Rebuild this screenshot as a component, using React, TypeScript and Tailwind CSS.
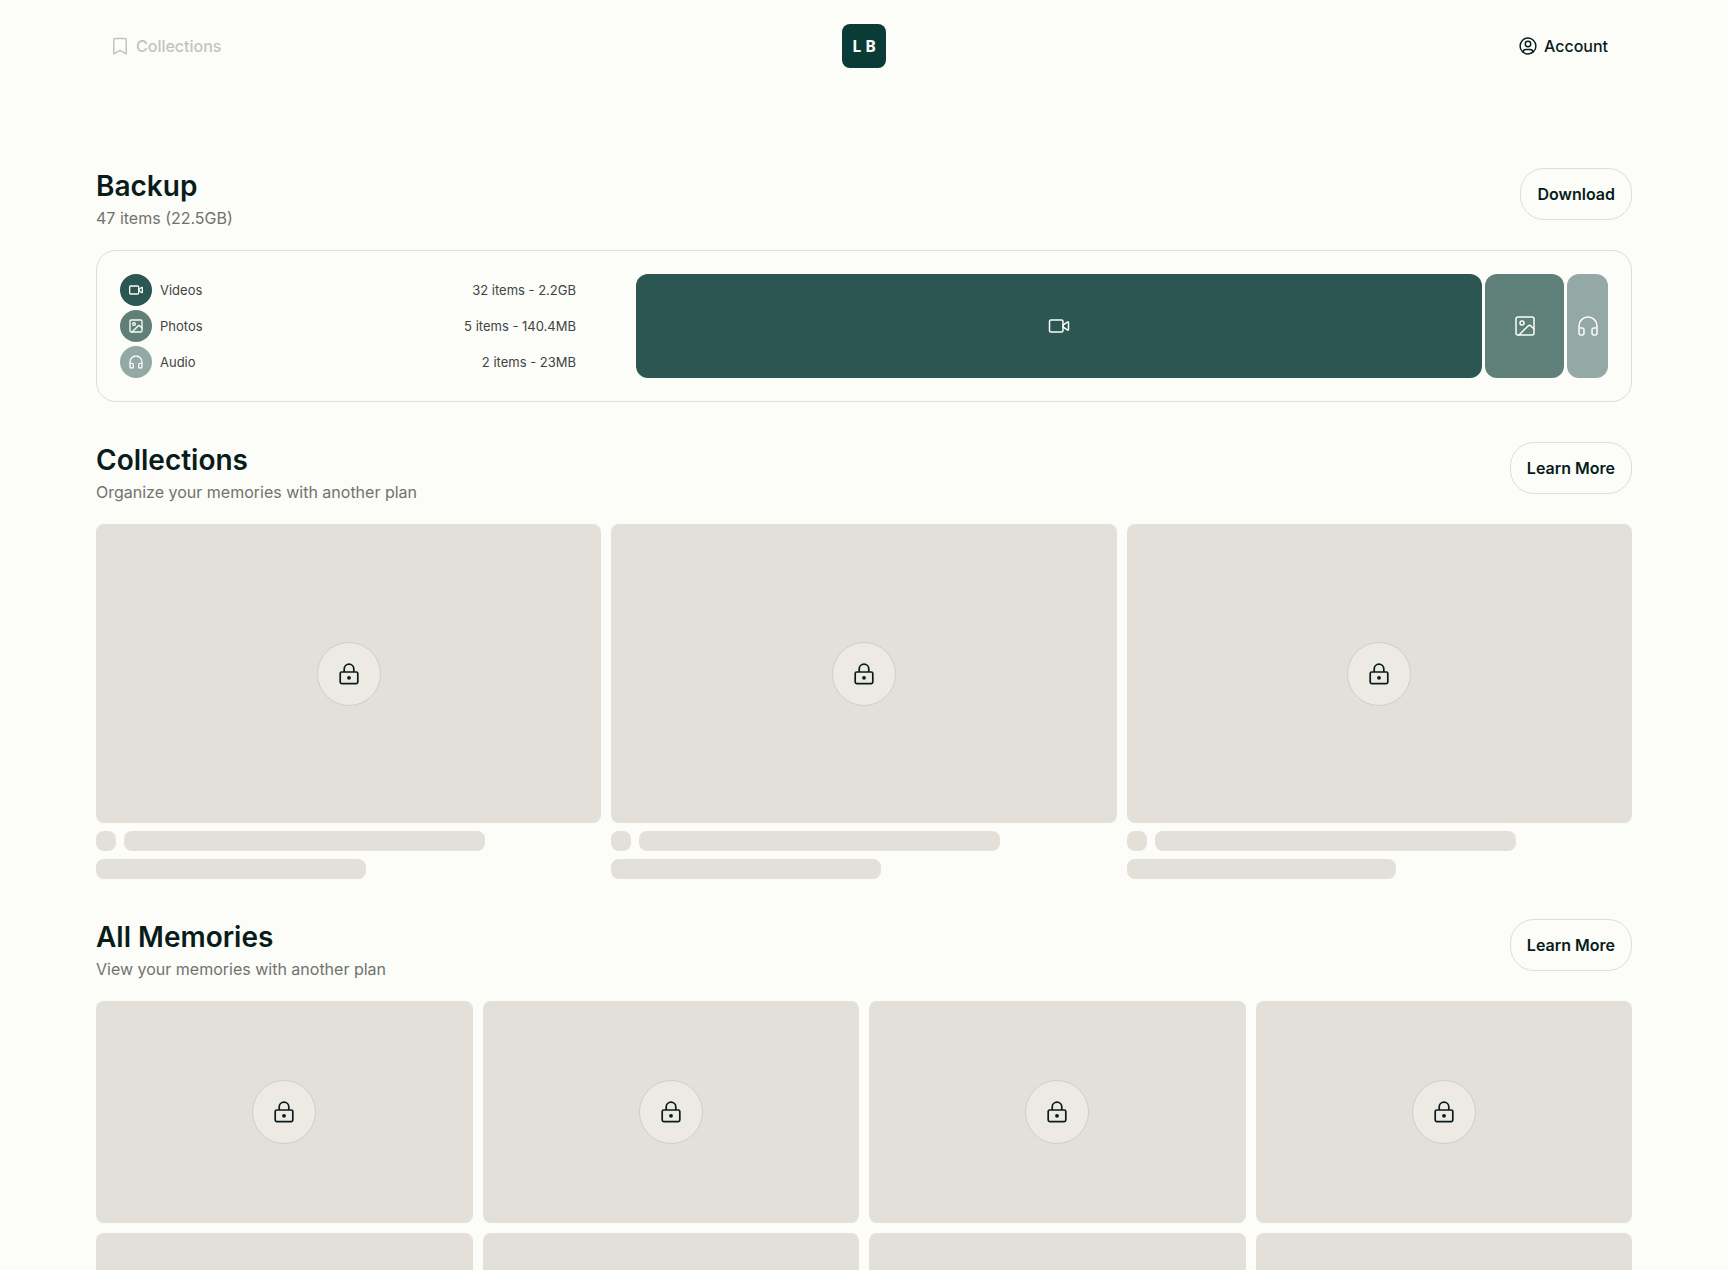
import type { ReactNode } from 'react';
import { Headphones, Image as ImageIcon } from 'lucide-react';

type IconProps = { className?: string };

function VideoIcon({ className }: IconProps) {
    return (
        <svg className={className} viewBox="0 0 24 24" fill="none" stroke="currentColor" strokeWidth="1.5" strokeLinejoin="round" aria-hidden="true">
            <rect x="2.5" y="6" width="13.5" height="12" rx="1.5" />
            <path d="M16 11.2 20.3 8.2q1.2-.7 1.2.5v6.6q0 1.2-1.2.5L16 12.8Z" />
        </svg>
    );
}

function PhotoIcon({ className }: IconProps) {
    return <ImageIcon className={className} strokeWidth={1.5} aria-hidden="true" />;
}

function AudioIcon({ className }: IconProps) {
    return <Headphones className={className} strokeWidth={1.5} aria-hidden="true" />;
}

function BookmarkIcon({ className }: IconProps) {
    return (
        <svg className={className} viewBox="0 0 24 24" fill="none" stroke="currentColor" strokeWidth="1.75" strokeLinejoin="round" aria-hidden="true">
            <path d="M4.5 4.5a1.5 1.5 0 0 1 1.5-1.5h12a1.5 1.5 0 0 1 1.5 1.5v17L12 17.2 4.5 21.5Z" />
        </svg>
    );
}

function AccountIcon({ className }: IconProps) {
    return (
        <svg className={className} viewBox="0 0 24 24" fill="none" stroke="currentColor" strokeWidth="1.75" strokeLinecap="round" aria-hidden="true">
            <circle cx="12" cy="12" r="9.5" />
            <circle cx="12" cy="9.5" r="3.3" />
            <path d="M6 19.3c.3-2 1.7-3 3.5-3h5c1.8 0 3.2 1 3.5 3" />
        </svg>
    );
}

function LockIcon({ className }: IconProps) {
    return (
        <svg className={className} viewBox="0 0 24 24" fill="none" stroke="currentColor" strokeWidth="1.7" strokeLinejoin="round" aria-hidden="true">
            <rect x="3.2" y="10" width="17.6" height="11.6" rx="1.5" />
            <path d="M7.2 10V7a4.8 4.8 0 0 1 9.6 0v3" />
            <circle cx="12" cy="15.8" r="1.9" fill="currentColor" stroke="none" />
        </svg>
    );
}

const mediaTypes = [
    { label: 'Videos', detail: '32 items - 2.2GB', share: 846, color: 'bg-[#2c5651]', Icon: VideoIcon },
    { label: 'Photos', detail: '5 items - 140.4MB', share: 79, color: 'bg-[#5f8079]', Icon: PhotoIcon },
    { label: 'Audio', detail: '2 items - 23MB', share: 41, color: 'bg-[#94a8a5]', Icon: AudioIcon },
];

function Section({ title, subtitle, action, children }: { title: string; subtitle: string; action: string; children: ReactNode }) {
    return (
        <section>
            <div className="flex items-start justify-between pb-5">
                <div>
                    <h2 className="text-[28px] leading-9 font-semibold">{title}</h2>
                    <p className="mt-0.5 text-base leading-6 text-[#70736f]">{subtitle}</p>
                </div>
                <button type="button" className="h-13 rounded-3xl border border-[#dcdeda] px-4 text-base font-semibold cursor-pointer">
                    {action}
                </button>
            </div>
            {children}
        </section>
    );
}

function LockedTile({ className }: { className: string }) {
    return (
        <div className={`flex items-center justify-center rounded-lg bg-[#e3e0da] ${className}`}>
            <div className="flex size-16 items-center justify-center rounded-full border border-[#d0cec9] bg-[#edeae4]">
                <LockIcon className="size-6" />
            </div>
        </div>
    );
}

export default function App() {
    return (
        <div className="h-screen overflow-hidden bg-[#fcfcf8] px-24 font-['Inter',sans-serif] text-[#081c1c]">
            <header className="grid grid-cols-3 items-center py-6">
                <a href="#collections" className="flex items-center gap-1.5 justify-self-start px-3.5 text-base font-medium text-[#c0c5c2]">
                    <BookmarkIcon className="size-5" />
                    Collections
                </a>
                <a href="#home" className="flex size-11 items-center justify-center justify-self-center rounded-lg bg-[#0b3b36] font-['Noto_Sans',sans-serif] text-base font-bold text-[#fcfcf8]">
                    L B
                </a>
                <a href="#account" className="flex items-center gap-1.5 justify-self-end px-6 text-base font-medium">
                    <AccountIcon className="size-5" />
                    Account
                </a>
            </header>

            <main className="flex flex-col gap-10 pt-19">
                <Section title="Backup" subtitle="47 items (22.5GB)" action="Download">
                    <div className="grid grid-cols-[38fr_81fr] gap-15 rounded-[20px] border border-[#dcdeda] p-[23px]">
                        <ul className="flex flex-col gap-1 text-[13px] leading-5 text-[#404444]">
                            {mediaTypes.map(({ label, detail, color, Icon }) => (
                                <li key={label} className="flex items-center gap-2">
                                    <span className={`flex size-8 items-center justify-center rounded-full text-[#fcfcf8] ${color}`}>
                                        <Icon className="size-4 [stroke-width:2]" />
                                    </span>
                                    <span className="flex-1">{label}</span>
                                    <span>{detail}</span>
                                </li>
                            ))}
                        </ul>
                        <div className="flex gap-[3px]">
                            {mediaTypes.map(({ label, share, color, Icon }) => (
                                <div
                                    key={label}
                                    className={`flex basis-0 items-center justify-center rounded-xl text-[#fcfcf8] ${color}`}
                                    style={{ flexGrow: share }}
                                >
                                    <Icon className="size-6" />
                                </div>
                            ))}
                        </div>
                    </div>
                </Section>

                <Section title="Collections" subtitle="Organize your memories with another plan" action="Learn More">
                    <div className="grid grid-cols-3 gap-2.5">
                        {[1, 2, 3].map((id) => (
                            <div key={id} className="flex flex-col gap-2">
                                <LockedTile className="aspect-[505/299]" />
                                <div className="flex gap-2">
                                    <div className="size-5 rounded-lg bg-[#e3e0da]" />
                                    <div className="h-5 w-5/7 rounded-lg bg-[#e3e0da]" />
                                </div>
                                <div className="h-5 w-8/15 rounded-lg bg-[#e3e0da]" />
                            </div>
                        ))}
                    </div>
                </Section>

                <Section title="All Memories" subtitle="View your memories with another plan" action="Learn More">
                    <div className="grid grid-cols-4 gap-2.5">
                        {[1, 2, 3, 4, 5, 6, 7, 8].map((id) => (
                            <LockedTile key={id} className="aspect-[17/10]" />
                        ))}
                    </div>
                </Section>
            </main>
        </div>
    );
}
